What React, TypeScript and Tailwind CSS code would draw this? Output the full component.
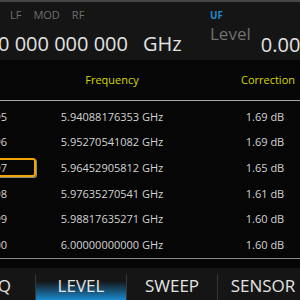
const rows = [
  { idx: "95", freq: "5.94088176353 GHz", corr: "1.69 dB" },
  { idx: "96", freq: "5.95270541082 GHz", corr: "1.69 dB" },
  { idx: "97", freq: "5.96452905812 GHz", corr: "1.65 dB", selected: true },
  { idx: "98", freq: "5.97635270541 GHz", corr: "1.61 dB" },
  { idx: "99", freq: "5.98817635271 GHz", corr: "1.60 dB" },
  { idx: "100", freq: "6.00000000000 GHz", corr: "1.60 dB" },
];

const tabs = ["FREQ", "LEVEL", "SWEEP", "SENSOR"];

// ucor table screen of a signal generator
const App = () => {
  return (
    <div
      className="w-[300px] h-[300px] overflow-hidden bg-[#060606] flex flex-col"
      style={{ fontFamily: '"Open Sans", "Noto Sans", sans-serif' }}
    >
      {/* status / frequency header */}
      <div className="h-[60px] shrink-0 bg-[#151515] border-t-2 border-[#454545] flex">
        <div className="w-[210px] shrink-0 flex flex-col">
          <div className="flex gap-[12px] pl-[10px] pt-[6px] text-[11px] leading-[14px] text-[#6f6f6f]">
            <span>LF</span>
            <span>MOD</span>
            <span>RF</span>
          </div>
          <div className="flex -ml-[2px] mt-[10px] text-[20px] leading-[24px] text-[#e2e2e2] whitespace-nowrap">
            <span>0 000 000 000</span>
            <span className="ml-[15px]">GHz</span>
          </div>
        </div>
        <div className="flex flex-col shrink-0">
          <span className="pt-[7px] text-[10px] leading-[13px] font-bold text-[#1f8ad0]">UF</span>
          <span className="mt-[2px] text-[17px] leading-[20px] text-[#707070]">Level</span>
        </div>
        <span className="ml-[10px] pt-[31px] text-[20px] leading-[24px] text-[#e2e2e2] whitespace-nowrap">
          0.00
        </span>
      </div>

      {/* table header */}
      <div className="h-[40px] shrink-0 grid grid-cols-[36px_152px_48px_64px] text-[11px] leading-[14px] text-[#d8d800]">
        <span />
        <span className="text-center pt-[13px]">Frequency</span>
        <span />
        <span className="text-center pt-[13px]">Correction</span>
      </div>
      <div className="h-px shrink-0 bg-[#a8a8a8]" />

      {/* table rows */}
      <div className="mt-[3px] flex flex-col text-[11px] leading-[14px] text-[#d4d4d4]">
        {rows.map((r) => (
          <div key={r.idx} className="h-[25.6px] grid grid-cols-[36px_152px_48px_64px] items-center">
            <div
              className={`h-[19px] w-[56px] -ml-[20px] flex items-center justify-end ${
                r.selected
                  ? "border-2 border-[#f2a400] rounded-[3px] shadow-[1px_1px_0_#8a8a8a] pr-[27px]"
                  : "pr-[29px]"
              }`}
            >
              {r.idx}
            </div>
            <span className="text-center whitespace-nowrap">{r.freq}</span>
            <span />
            <span className="text-center pr-[6px] whitespace-nowrap">{r.corr}</span>
          </div>
        ))}
      </div>
      <div className="h-px shrink-0 bg-[#8a8a8a]" />

      {/* softkey tabs */}
      <div className="mt-[9px] h-[33px] shrink-0 bg-[#151515] flex -ml-[55px]">
        {tabs.map((t, i) => (
          <div key={t} className="flex">
            {i > 0 && <div className="w-px h-[27px] self-end bg-[#363636]" />}
            <div
              className={`w-[90px] shrink-0 flex items-center justify-center pt-[4px] text-[17px] leading-[20px] text-[#e4e4e4] ${
                t === "LEVEL" ? "bg-linear-to-b from-transparent from-[40%] to-[#1a90d8]" : ""
              }`}
            >
              {t}
            </div>
          </div>
        ))}
      </div>
    </div>
  );
};

export default App;
